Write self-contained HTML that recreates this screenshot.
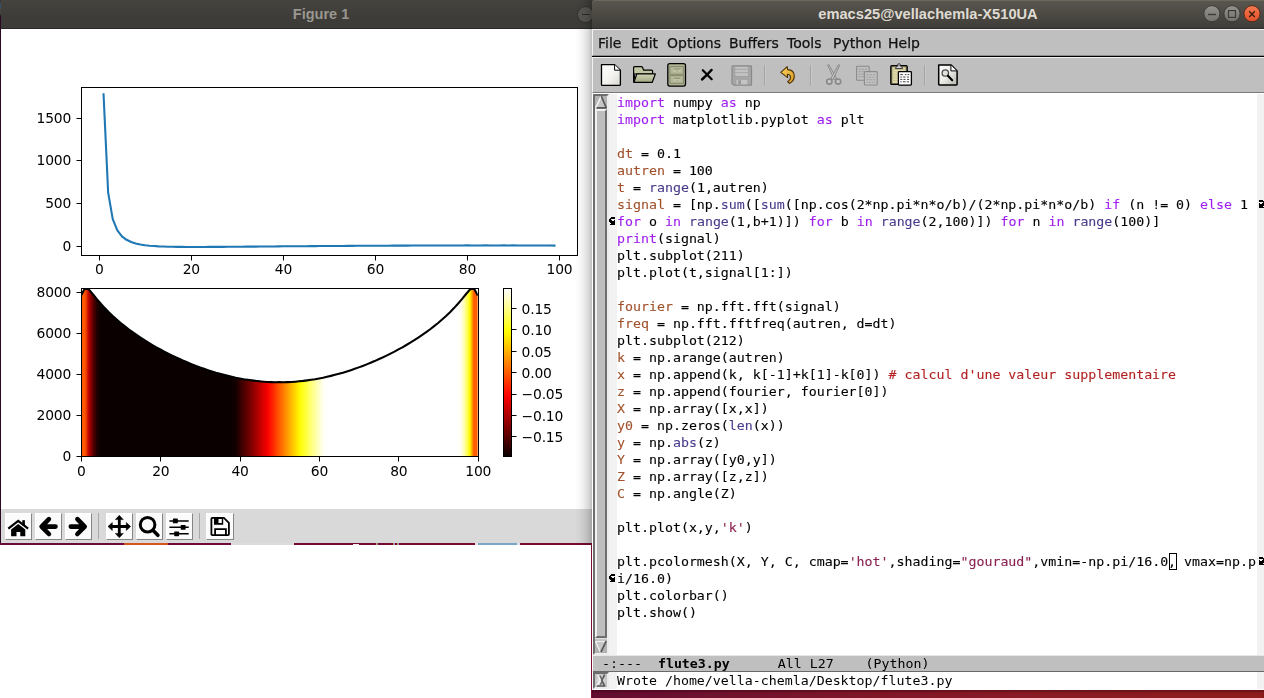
<!DOCTYPE html>
<html lang="en">
<head>
<meta charset="utf-8">
<title>Figure 1 / emacs25</title>
<style>
html,body{margin:0;padding:0}
body{width:1264px;height:698px;overflow:hidden;position:relative;background:#fff;font-family:"Liberation Sans","DejaVu Sans",sans-serif}
.abs{position:absolute}
/* ---------- figure window ---------- */
#canvas{will-change:transform}
#leftstrip{left:0;top:0;width:1px;height:545px;background:linear-gradient(#3a3b38 0,#3a3b38 2px,#35506e 4px,#35506e 7px,#45443f 9px,#45443f 14px,#2a0a22 16px)}
#figtitle{left:1px;top:0;width:700px;height:28px;background:linear-gradient(#45443f,#3d3c38 60%)}
#figtitle:after{content:"";position:absolute;left:0;top:28px;width:100%;height:1px;background:#2b2a26}
#figname{left:1px;top:0;width:640px;height:28px;line-height:28px;text-align:center;color:#9a9790;font-weight:bold;font-size:14.5px}
#figmin{left:577px;top:5.5px;width:17px;height:17px;border-radius:50%;background:#595853;border:1px solid #32312e;box-sizing:border-box}
#figmin:after{content:"";position:absolute;left:4px;top:7.6px;width:8px;height:1.2px;background:#2f2e2b}
#figtb{left:1px;top:509px;width:640px;height:34px;background:#d9d9d9}
.tbtn{position:absolute;top:4px;width:27px;height:27px;background:#fbfbfb;box-sizing:border-box;border:1px solid;border-color:#fff #858585 #858585 #fff}
.tbtn svg{position:absolute;left:-1px;top:-1px}
.tsep{position:absolute;top:4px;width:1px;height:26px;background:#a8a8a8}
#strip{left:0;top:543px;width:592px;height:2px;background:linear-gradient(90deg,#6a0a3c,#7a0a2e)}
#strip i{position:absolute;top:0;height:2px;display:block}
#vline{left:591px;top:545px;width:1px;height:153px;background:#7a1038}
/* ---------- emacs window ---------- */
#emacs{left:592px;top:0;width:672px;height:690px}
#eshadow{left:570px;top:0;width:22px;height:545px;background:linear-gradient(90deg,rgba(0,0,0,0) 20%,rgba(0,0,0,.025) 42%,rgba(0,0,0,.075) 64%,rgba(0,0,0,.15) 84%,rgba(0,0,0,.25))}
#etitle{left:0;top:0;width:672px;height:28px;background:linear-gradient(#5a574f,#3f3d39);border-top-left-radius:4px;box-shadow:inset 0 1px 0 #6a685d}
#etitle:after{content:"";position:absolute;left:0;top:28px;width:100%;height:1px;background:#2e2d29}
#ename{left:0;top:0;width:672px;height:28px;line-height:28px;text-align:center;color:#dfdbd2;font-weight:bold;font-size:14.65px}
#menubar{left:0;top:29px;width:672px;height:27px;background:#bfbfbf;border-top:1px solid #f2f2f2;border-left:1px solid #f2f2f2;box-sizing:border-box;border-bottom:1px solid #8c8c8c}
.mi{position:absolute;top:4px;font-size:14px;line-height:18px;color:#111;font-family:"DejaVu Sans","Liberation Sans",sans-serif;white-space:pre;-webkit-text-stroke:.25px #111}
#blackline{left:0;top:56px;width:672px;height:1px;background:#000}
#toolbar{left:0;top:57px;width:672px;height:36px;background:#bfbfbf;border-top:1px solid #f0f0f0;border-left:1px solid #f2f2f2;border-bottom:1px solid #7a7a7a;box-sizing:border-box}
.esep{position:absolute;top:8px;width:1px;height:20px;background:#a2a2a2;box-shadow:1px 0 0 #d0d0d0}
.ico{position:absolute}
#textarea{left:0;top:93px;width:672px;height:597px;background:#fff}
#lfringe{left:17px;top:94px;width:8px;height:561px;background:#f2f2f2}
#rfringe{left:665px;top:94px;width:7px;height:561px;background:#f2f2f2}
#code{left:25px;top:94px;width:640px;font-family:"DejaVu Sans Mono","Liberation Mono",monospace;font-size:13.288px;color:#000}
.ln{-webkit-text-stroke-width:.12px;height:17px;line-height:17px;white-space:pre;transform:scaleY(.93);transform-origin:0 13px}
.k{color:#a020f0}.v{color:#a0522d}.b{color:#483d8b}.s{color:#8b2252}.c{color:#b22222}
#cursor{left:577px;top:553px;width:6px;height:15px;border:1px solid #000;box-sizing:content-box}
/* scrollbar */
#sb{left:1px;top:94px;width:16px;height:561px;background:#b3b3b3;border:2px solid;border-color:#6e6e6e #ececec #ececec #6e6e6e;box-sizing:border-box}
#thumb{left:0;top:13px;width:12px;height:529px;background:#bdbdbd;box-sizing:border-box;border:2px solid;border-color:#f2f2f2 #6e6e6e #6e6e6e #f2f2f2}
#modeline{left:1px;top:655px;width:671px;height:17px;background:#bfbfbf;box-sizing:border-box;border-top:1px solid #e6e6e6;border-bottom:1px solid #6a6a6a;font-family:"DejaVu Sans Mono","Liberation Mono",monospace;font-size:13.288px;line-height:15px;white-space:pre;color:#000;padding-left:1px}
#mltext{display:block;height:15px;transform:scaleY(.93);transform-origin:0 12px}
#echo{left:25px;top:672px;width:640px;height:17px;line-height:17px;font-family:"DejaVu Sans Mono","Liberation Mono",monospace;font-size:13.288px;white-space:pre;color:#000;transform:scaleY(.93);transform-origin:0 13px}
#elf{left:17px;top:672px;width:8px;height:17px;background:#f2f2f2}
#erf{left:665px;top:672px;width:7px;height:17px;background:#f2f2f2}
#msb{left:1px;top:672px;width:16px;height:17px;background:#c4c4c4;border:2px solid;border-color:#6e6e6e #ececec #ececec #6e6e6e;box-sizing:border-box}
#bottom{left:592px;top:690px;width:672px;height:8px;background:linear-gradient(90deg,#640b30,#6e1130 16%,#7e1629 38%,#881a26 61%,#8e1d1c);box-shadow:inset 0 2px 2px rgba(30,0,0,.3)}
</style>
</head>
<body>
<div id="leftstrip" class="abs"></div>
<div id="figtitle" class="abs"></div>
<div id="figname" class="abs">Figure 1</div>
<div id="figmin" class="abs"></div>
<svg id="canvas" width="640" height="480" viewBox="0 0 640 480" style="position:absolute;left:1px;top:29px;font-family:'DejaVu Sans','Liberation Sans',sans-serif;font-size:13.89px;letter-spacing:-0.2px">
<rect width="640" height="480" fill="#fff"/>
<polyline points="102.55,65.24 107.15,163.58 111.75,190.16 116.35,201.45 120.95,207.37 125.55,210.81 130.15,213.02 134.75,214.45 139.35,215.46 143.96,216.17 148.56,216.70 153.16,217.04 157.76,217.35 162.36,217.53 166.96,217.68 171.56,217.78 176.16,217.88 180.76,217.90 185.37,217.96 189.97,217.94 194.57,217.96 199.17,217.96 203.77,217.96 208.37,217.90 212.97,217.91 217.57,217.87 222.17,217.85 226.78,217.80 231.38,217.79 235.98,217.71 240.58,217.72 245.18,217.65 249.78,217.63 254.38,217.59 258.98,217.55 263.58,217.48 268.19,217.49 272.79,217.43 277.39,217.40 281.99,217.33 286.59,217.33 291.19,217.26 295.79,217.26 300.39,217.20 304.99,217.17 309.60,217.14 314.20,217.12 318.80,217.04 323.40,217.05 328.00,217.00 332.60,216.98 337.20,216.94 341.80,216.94 346.40,216.87 351.01,216.87 355.61,216.82 360.21,216.82 364.81,216.79 369.41,216.78 374.01,216.70 378.61,216.73 383.21,216.70 387.81,216.67 392.42,216.64 397.02,216.64 401.62,216.60 406.22,216.61 410.82,216.57 415.42,216.57 420.02,216.53 424.62,216.54 429.22,216.48 433.83,216.52 438.43,216.50 443.03,216.48 447.63,216.46 452.23,216.47 456.83,216.44 461.43,216.46 466.03,216.41 470.63,216.43 475.24,216.43 479.84,216.44 484.44,216.39 489.04,216.43 493.64,216.42 498.24,216.43 502.84,216.41 507.44,216.44 512.04,216.40 516.65,216.44 521.25,216.44 525.85,216.47 530.45,216.47 535.05,216.49 539.65,216.47 544.25,216.54 548.85,216.55 553.45,216.58" fill="none" stroke="#1f77b4" stroke-width="2.08" stroke-linejoin="round" stroke-linecap="square"/>
<line x1="98.5" y1="226.5" x2="98.5" y2="231.5" stroke="#000" stroke-width="1.0"/>
<text x="98.34" y="245" text-anchor="middle">0</text>
<line x1="190.5" y1="226.5" x2="190.5" y2="231.5" stroke="#000" stroke-width="1.0"/>
<text x="190.37" y="245" text-anchor="middle">20</text>
<line x1="282.5" y1="226.5" x2="282.5" y2="231.5" stroke="#000" stroke-width="1.0"/>
<text x="282.39" y="245" text-anchor="middle">40</text>
<line x1="374.5" y1="226.5" x2="374.5" y2="231.5" stroke="#000" stroke-width="1.0"/>
<text x="374.41" y="245" text-anchor="middle">60</text>
<line x1="466.5" y1="226.5" x2="466.5" y2="231.5" stroke="#000" stroke-width="1.0"/>
<text x="466.43" y="245" text-anchor="middle">80</text>
<line x1="558.5" y1="226.5" x2="558.5" y2="231.5" stroke="#000" stroke-width="1.0"/>
<text x="558.46" y="245" text-anchor="middle">100</text>
<line x1="75.5" y1="217.5" x2="80.5" y2="217.5" stroke="#000" stroke-width="1.0"/>
<text x="70.08" y="222" text-anchor="end">0</text>
<line x1="75.5" y1="174.5" x2="80.5" y2="174.5" stroke="#000" stroke-width="1.0"/>
<text x="70.08" y="179" text-anchor="end">500</text>
<line x1="75.5" y1="131.5" x2="80.5" y2="131.5" stroke="#000" stroke-width="1.0"/>
<text x="70.08" y="136" text-anchor="end">1000</text>
<line x1="75.5" y1="89.5" x2="80.5" y2="89.5" stroke="#000" stroke-width="1.0"/>
<text x="70.08" y="94" text-anchor="end">1500</text>
<rect x="80.5" y="58.5" width="496.0" height="168.0" fill="none" stroke="#000" stroke-width="1.0"/>
<defs><linearGradient id="hotg" gradientUnits="userSpaceOnUse" x1="80.00" y1="0" x2="476.80" y2="0">
<stop offset="0.00" stop-color="#ff5c00"/>
<stop offset="0.01" stop-color="#ff5600"/>
<stop offset="0.02" stop-color="#ba0000"/>
<stop offset="0.03" stop-color="#5f0000"/>
<stop offset="0.04" stop-color="#1d0000"/>
<stop offset="0.05" stop-color="#0b0000"/>
<stop offset="0.38" stop-color="#0b0000"/>
<stop offset="0.39" stop-color="#120000"/>
<stop offset="0.40" stop-color="#2f0000"/>
<stop offset="0.41" stop-color="#4a0000"/>
<stop offset="0.42" stop-color="#640000"/>
<stop offset="0.43" stop-color="#810000"/>
<stop offset="0.44" stop-color="#a00000"/>
<stop offset="0.45" stop-color="#bd0000"/>
<stop offset="0.46" stop-color="#dd0000"/>
<stop offset="0.47" stop-color="#f90000"/>
<stop offset="0.48" stop-color="#ff1a00"/>
<stop offset="0.49" stop-color="#ff3a00"/>
<stop offset="0.50" stop-color="#ff5c00"/>
<stop offset="0.51" stop-color="#ff7b00"/>
<stop offset="0.52" stop-color="#ff9b00"/>
<stop offset="0.53" stop-color="#ffba00"/>
<stop offset="0.54" stop-color="#ffd700"/>
<stop offset="0.55" stop-color="#fff600"/>
<stop offset="0.56" stop-color="#ffff1f"/>
<stop offset="0.57" stop-color="#ffff4e"/>
<stop offset="0.58" stop-color="#ffff79"/>
<stop offset="0.59" stop-color="#ffffa0"/>
<stop offset="0.60" stop-color="#ffffc8"/>
<stop offset="0.61" stop-color="#fffff3"/>
<stop offset="0.62" stop-color="#ffffff"/>
<stop offset="0.95" stop-color="#ffffff"/>
<stop offset="0.96" stop-color="#ffffe3"/>
<stop offset="0.97" stop-color="#ffff81"/>
<stop offset="0.98" stop-color="#fff900"/>
<stop offset="0.99" stop-color="#ff5e00"/>
<stop offset="1.00" stop-color="#ff5c00"/>
</linearGradient>
<linearGradient id="cbg" x1="0" y1="1" x2="0" y2="0">
<stop offset="0.0000" stop-color="#0b0000"/>
<stop offset="0.0312" stop-color="#200000"/>
<stop offset="0.0625" stop-color="#350000"/>
<stop offset="0.0938" stop-color="#4a0000"/>
<stop offset="0.1250" stop-color="#5f0000"/>
<stop offset="0.1562" stop-color="#740000"/>
<stop offset="0.1875" stop-color="#890000"/>
<stop offset="0.2188" stop-color="#9e0000"/>
<stop offset="0.2500" stop-color="#b30000"/>
<stop offset="0.2812" stop-color="#c80000"/>
<stop offset="0.3125" stop-color="#dd0000"/>
<stop offset="0.3438" stop-color="#f20000"/>
<stop offset="0.3750" stop-color="#ff0800"/>
<stop offset="0.4062" stop-color="#ff1d00"/>
<stop offset="0.4375" stop-color="#ff3200"/>
<stop offset="0.4688" stop-color="#ff4700"/>
<stop offset="0.5000" stop-color="#ff5c00"/>
<stop offset="0.5312" stop-color="#ff7100"/>
<stop offset="0.5625" stop-color="#ff8600"/>
<stop offset="0.5938" stop-color="#ff9b00"/>
<stop offset="0.6250" stop-color="#ffb000"/>
<stop offset="0.6562" stop-color="#ffc500"/>
<stop offset="0.6875" stop-color="#ffda00"/>
<stop offset="0.7188" stop-color="#ffef00"/>
<stop offset="0.7500" stop-color="#ffff07"/>
<stop offset="0.7812" stop-color="#ffff26"/>
<stop offset="0.8125" stop-color="#ffff46"/>
<stop offset="0.8438" stop-color="#ffff65"/>
<stop offset="0.8750" stop-color="#ffff85"/>
<stop offset="0.9062" stop-color="#ffffa4"/>
<stop offset="0.9375" stop-color="#ffffc4"/>
<stop offset="0.9688" stop-color="#ffffe3"/>
<stop offset="1.0000" stop-color="#ffffff"/>
</linearGradient>
<clipPath id="ax2clip"><rect x="80.00" y="259.20" width="396.80" height="168.00"/></clipPath></defs>
<g clip-path="url(#ax2clip)"><polygon points="80.00,427.20 80.00,266.59 83.97,259.20 87.94,260.56 91.90,265.23 95.87,270.11 99.84,274.75 103.81,279.09 107.78,283.16 111.74,286.97 115.71,290.56 119.68,293.95 123.65,297.17 127.62,300.25 131.58,303.16 135.55,305.95 139.52,308.64 143.49,311.21 147.46,313.64 151.42,316.02 155.39,318.31 159.36,320.45 163.33,322.62 167.30,324.65 171.26,326.62 175.23,328.51 179.20,330.26 183.17,332.08 187.14,333.76 191.10,335.38 195.07,336.91 199.04,338.39 203.01,339.80 206.98,341.15 210.94,342.41 214.91,343.66 218.88,344.79 222.85,345.86 226.82,346.87 230.78,347.80 234.75,348.67 238.72,349.42 242.69,350.18 246.66,350.83 250.62,351.39 254.59,351.90 258.56,352.32 262.53,352.67 266.50,352.94 270.46,353.13 274.43,353.25 278.40,353.03 282.37,353.25 286.34,353.13 290.30,352.94 294.27,352.67 298.24,352.32 302.21,351.90 306.18,351.39 310.14,350.83 314.11,350.18 318.08,349.42 322.05,348.67 326.02,347.80 329.98,346.87 333.95,345.86 337.92,344.79 341.89,343.66 345.86,342.41 349.82,341.15 353.79,339.80 357.76,338.39 361.73,336.91 365.70,335.38 369.66,333.76 373.63,332.08 377.60,330.26 381.57,328.51 385.54,326.62 389.50,324.65 393.47,322.62 397.44,320.45 401.41,318.31 405.38,316.02 409.34,313.64 413.31,311.21 417.28,308.64 421.25,305.95 425.22,303.16 429.18,300.25 433.15,297.17 437.12,293.95 441.09,290.56 445.06,286.97 449.02,283.16 452.99,279.09 456.96,274.75 460.93,270.11 464.90,265.23 468.86,260.56 472.83,259.20 476.80,266.59 476.80,427.20" fill="url(#hotg)"/>
<polyline points="80.00,266.59 83.97,259.20 87.94,260.56 91.90,265.23 95.87,270.11 99.84,274.75 103.81,279.09 107.78,283.16 111.74,286.97 115.71,290.56 119.68,293.95 123.65,297.17 127.62,300.25 131.58,303.16 135.55,305.95 139.52,308.64 143.49,311.21 147.46,313.64 151.42,316.02 155.39,318.31 159.36,320.45 163.33,322.62 167.30,324.65 171.26,326.62 175.23,328.51 179.20,330.26 183.17,332.08 187.14,333.76 191.10,335.38 195.07,336.91 199.04,338.39 203.01,339.80 206.98,341.15 210.94,342.41 214.91,343.66 218.88,344.79 222.85,345.86 226.82,346.87 230.78,347.80 234.75,348.67 238.72,349.42 242.69,350.18 246.66,350.83 250.62,351.39 254.59,351.90 258.56,352.32 262.53,352.67 266.50,352.94 270.46,353.13 274.43,353.25 278.40,353.03 282.37,353.25 286.34,353.13 290.30,352.94 294.27,352.67 298.24,352.32 302.21,351.90 306.18,351.39 310.14,350.83 314.11,350.18 318.08,349.42 322.05,348.67 326.02,347.80 329.98,346.87 333.95,345.86 337.92,344.79 341.89,343.66 345.86,342.41 349.82,341.15 353.79,339.80 357.76,338.39 361.73,336.91 365.70,335.38 369.66,333.76 373.63,332.08 377.60,330.26 381.57,328.51 385.54,326.62 389.50,324.65 393.47,322.62 397.44,320.45 401.41,318.31 405.38,316.02 409.34,313.64 413.31,311.21 417.28,308.64 421.25,305.95 425.22,303.16 429.18,300.25 433.15,297.17 437.12,293.95 441.09,290.56 445.06,286.97 449.02,283.16 452.99,279.09 456.96,274.75 460.93,270.11 464.90,265.23 468.86,260.56 472.83,259.20 476.80,266.59" fill="none" stroke="#000" stroke-width="2.08" stroke-linejoin="round"/></g>
<line x1="80.5" y1="427.5" x2="80.5" y2="432.5" stroke="#000" stroke-width="1.0"/>
<text x="80.40" y="447" text-anchor="middle">0</text>
<line x1="159.5" y1="427.5" x2="159.5" y2="432.5" stroke="#000" stroke-width="1.0"/>
<text x="159.76" y="447" text-anchor="middle">20</text>
<line x1="239.5" y1="427.5" x2="239.5" y2="432.5" stroke="#000" stroke-width="1.0"/>
<text x="239.12" y="447" text-anchor="middle">40</text>
<line x1="318.5" y1="427.5" x2="318.5" y2="432.5" stroke="#000" stroke-width="1.0"/>
<text x="318.48" y="447" text-anchor="middle">60</text>
<line x1="397.5" y1="427.5" x2="397.5" y2="432.5" stroke="#000" stroke-width="1.0"/>
<text x="397.84" y="447" text-anchor="middle">80</text>
<line x1="477.5" y1="427.5" x2="477.5" y2="432.5" stroke="#000" stroke-width="1.0"/>
<text x="477.20" y="447" text-anchor="middle">100</text>
<line x1="75.5" y1="427.5" x2="80.5" y2="427.5" stroke="#000" stroke-width="1.0"/>
<text x="70.08" y="432" text-anchor="end">0</text>
<line x1="75.5" y1="386.5" x2="80.5" y2="386.5" stroke="#000" stroke-width="1.0"/>
<text x="70.08" y="391" text-anchor="end">2000</text>
<line x1="75.5" y1="345.5" x2="80.5" y2="345.5" stroke="#000" stroke-width="1.0"/>
<text x="70.08" y="350" text-anchor="end">4000</text>
<line x1="75.5" y1="304.5" x2="80.5" y2="304.5" stroke="#000" stroke-width="1.0"/>
<text x="70.08" y="309" text-anchor="end">6000</text>
<line x1="75.5" y1="263.5" x2="80.5" y2="263.5" stroke="#000" stroke-width="1.0"/>
<text x="70.08" y="268" text-anchor="end">8000</text>
<rect x="80.5" y="259.5" width="397.0" height="168.0" fill="none" stroke="#000" stroke-width="1.0"/>
<rect x="502.5" y="259.5" width="8.0" height="168.0" fill="url(#cbg)" stroke="#000" stroke-width="1.0"/>
<line x1="510.5" y1="407.5" x2="515.5" y2="407.5" stroke="#000" stroke-width="1.0"/>
<text x="520.62" y="413" text-anchor="start">−0.15</text>
<line x1="510.5" y1="386.5" x2="515.5" y2="386.5" stroke="#000" stroke-width="1.0"/>
<text x="520.62" y="392" text-anchor="start">−0.10</text>
<line x1="510.5" y1="365.5" x2="515.5" y2="365.5" stroke="#000" stroke-width="1.0"/>
<text x="520.62" y="370" text-anchor="start">−0.05</text>
<line x1="510.5" y1="343.5" x2="515.5" y2="343.5" stroke="#000" stroke-width="1.0"/>
<text x="520.62" y="349" text-anchor="start">0.00</text>
<line x1="510.5" y1="322.5" x2="515.5" y2="322.5" stroke="#000" stroke-width="1.0"/>
<text x="520.62" y="328" text-anchor="start">0.05</text>
<line x1="510.5" y1="300.5" x2="515.5" y2="300.5" stroke="#000" stroke-width="1.0"/>
<text x="520.62" y="306" text-anchor="start">0.10</text>
<line x1="510.5" y1="279.5" x2="515.5" y2="279.5" stroke="#000" stroke-width="1.0"/>
<text x="520.62" y="285" text-anchor="start">0.15</text>
</svg>
<div id="figtb" class="abs">
<div class="tbtn" style="left:4px"><svg width="27" height="27" viewBox="0 0 27 27"><path d="M3.3 15.7 L13.2 7.9 L23.1 15.7" fill="none" stroke="#000" stroke-width="2.2" stroke-linejoin="miter"/><rect x="17.3" y="7.2" width="2.6" height="5.5" fill="#000"/><path d="M6.1 16.6 L13.2 11 L20.3 16.6 V23.2 H15.3 V18.9 H11.5 V23.2 H6.1 Z" fill="#000"/></svg></div>
<div class="tbtn" style="left:34px"><svg width="27" height="27" viewBox="0 0 27 27"><path d="M13.9 6.2 L6.6 13.6 L13.9 21 M7.2 13.6 H20.5" fill="none" stroke="#000" stroke-width="4.6" stroke-linecap="round" stroke-linejoin="round"/></svg></div>
<div class="tbtn" style="left:64px"><svg width="27" height="27" viewBox="0 0 27 27"><path d="M12.4 6.2 L19.7 13.6 L12.4 21 M19.1 13.6 H5.8" fill="none" stroke="#000" stroke-width="4.6" stroke-linecap="round" stroke-linejoin="round"/></svg></div>
<div class="tsep" style="left:97px"></div>
<div class="tbtn" style="left:105px"><svg width="27" height="27" viewBox="0 0 27 27"><path d="M13.3 5 V22 M5 13.5 H22" fill="none" stroke="#000" stroke-width="2.8"/><path d="M13.3 2.3 L17.3 6.6 H9.3 Z M13.3 24.7 L17.3 20.4 H9.3 Z M2 13.5 L6.3 9.5 V17.5 Z M24.6 13.5 L20.3 9.5 V17.5 Z" fill="#000" stroke="#000" stroke-width="0.5" stroke-linejoin="round"/></svg></div>
<div class="tbtn" style="left:135px"><svg width="27" height="27" viewBox="0 0 27 27"><circle cx="11.6" cy="11.7" r="7.3" fill="none" stroke="#000" stroke-width="3"/><path d="M17.2 17.4 L21.9 22.3" stroke="#000" stroke-width="3.6" stroke-linecap="round"/></svg></div>
<div class="tbtn" style="left:165px"><svg width="27" height="27" viewBox="0 0 27 27"><path d="M3.4 7.9 H22.7 M3.4 14.3 H22.7 M3.4 20.8 H22.7" stroke="#000" stroke-width="1.5"/><rect x="6.9" y="5.5" width="4.9" height="4.8" rx="0.6" fill="#000"/><rect x="14.7" y="11.9" width="4.9" height="4.8" rx="0.6" fill="#000"/><rect x="8.2" y="18.4" width="4.9" height="4.8" rx="0.6" fill="#000"/></svg></div>
<div class="tsep" style="left:198px"></div>
<div class="tbtn" style="left:205px;width:28px"><svg width="28" height="27" viewBox="-1 0 28 27"><path d="M5.4 4.9 H16.9 L21.9 9.9 V21.2 Q21.9 22.1 21 22.1 H5.4 Q4.4 22.1 4.4 21.2 V5.9 Q4.4 4.9 5.4 4.9 Z" fill="none" stroke="#000" stroke-width="1.8"/><path d="M7 4.9 H16.2 V11.7 H7 Z M11.5 6 V10 H14.8 V6 Z" fill="#000" fill-rule="evenodd"/><path d="M8.1 22 V16.2 H18.9 V22" fill="none" stroke="#000" stroke-width="1.8"/></svg></div>

</div>
<div id="strip" class="abs"><i style="left:124px;width:44px;background:#d4541e"></i><i style="left:231px;width:63px;background:#dcdcdc"></i><i style="left:353px;top:1px;width:6px;height:1px;background:#f6eef2"></i><i style="left:376px;width:1px;background:#d9924a"></i><i style="left:377px;width:1px;background:#6b8fc0"></i><i style="left:393px;width:1px;background:#d9924a"></i><i style="left:394px;width:1px;background:#6b8fc0"></i><i style="left:397px;width:1px;background:#d9924a"></i><i style="left:398px;width:1px;background:#6b8fc0"></i><i style="left:475px;width:3px;background:#e6dfe3"></i><i style="left:478px;width:39px;background:#79a5c6"></i><i style="left:517px;width:3px;background:#e6dfe3"></i></div>
<div id="vline" class="abs"></div>
<div id="bottom" class="abs"></div>
<div id="eshadow" class="abs"></div>
<div id="emacs" class="abs">
 <div id="etitle" class="abs"></div>
 <div id="ename" class="abs">emacs25@vellachemla-X510UA</div>
 <svg class="abs" style="left:600px;top:0" width="72" height="28" viewBox="1192 0 72 28">
<defs>
<linearGradient id="wb" x1="0" y1="0" x2="0" y2="1"><stop offset="0" stop-color="#94928c"/><stop offset="1" stop-color="#75736d"/></linearGradient>
<linearGradient id="wc" x1="0" y1="0" x2="0" y2="1"><stop offset="0" stop-color="#f57a50"/><stop offset="1" stop-color="#e24f27"/></linearGradient>
</defs>
<circle cx="1211.9" cy="13.7" r="8.1" fill="url(#wb)" stroke="#3a3935" stroke-width="1"/>
<path d="M1208 14.5 H1216" stroke="#3d3c38" stroke-width="1.4"/>
<circle cx="1232" cy="13.7" r="8.1" fill="url(#wb)" stroke="#3a3935" stroke-width="1"/>
<rect x="1228.5" y="10.6" width="7" height="6.8" fill="none" stroke="#3d3c38" stroke-width="1.2"/>
<circle cx="1252" cy="13.7" r="8.1" fill="url(#wc)" stroke="#4a2a1e" stroke-width="1"/>
<path d="M1249.2 11.3 L1254.8 16.9 M1254.8 11.3 L1249.2 16.9" stroke="#3c1d12" stroke-width="1.4"/>
</svg>

 <div id="menubar" class="abs">
  <span class="mi" style="left:5px">File</span>
  <span class="mi" style="left:38px">Edit</span>
  <span class="mi" style="left:74px">Options</span>
  <span class="mi" style="left:136px">Buffers</span>
  <span class="mi" style="left:194px">Tools</span>
  <span class="mi" style="left:240px">Python</span>
  <span class="mi" style="left:295px">Help</span>
 </div>
 <div id="blackline" class="abs"></div>
 <div id="toolbar" class="abs">
<svg class="abs" style="left:-1px;top:-1px" width="672" height="36" viewBox="592 57 672 36">
<defs>
<linearGradient id="pg" x1="0" y1="0" x2="1" y2="1"><stop offset="0" stop-color="#ffffff"/><stop offset=".55" stop-color="#f4f3f0"/><stop offset="1" stop-color="#d6d4cc"/></linearGradient>
<linearGradient id="pg2" x1="0" y1="0" x2="1" y2="1"><stop offset="0" stop-color="#ffffff"/><stop offset=".5" stop-color="#ecece8"/><stop offset="1" stop-color="#b4b4ac"/></linearGradient>
<linearGradient id="fo" x1="0" y1="0" x2="0" y2="1"><stop offset="0" stop-color="#d3d6b6"/><stop offset="1" stop-color="#a3a783"/></linearGradient>
<linearGradient id="ud" x1="0" y1="0" x2="1" y2="1"><stop offset="0" stop-color="#fbd560"/><stop offset="1" stop-color="#d8961c"/></linearGradient>
</defs>
<!-- new file -->
<path d="M601.5 64.6 H614.6 L620.4 70.3 V84.4 Q620.4 85.3 619.5 85.3 H602.4 Q601.5 85.3 601.5 84.4 Z" fill="url(#pg)" stroke="#000" stroke-width="1.3" stroke-linejoin="round"/>
<path d="M614.6 64.8 V70.2 H620.2" fill="#fff" stroke="#000" stroke-width="1" stroke-linejoin="round"/>
<!-- open folder -->
<path d="M633.6 67.5 Q633.6 66.6 634.5 66.6 H641.3 Q642.2 66.6 642.6 67.4 L643.6 70.2 H651.6 Q652.6 70.2 652.6 71.2 V74 H633.6 Z" fill="#c3c6a5" stroke="#000" stroke-width="1.2" stroke-linejoin="round"/>
<path d="M633.6 73 V81 Q633.6 82.3 634.6 82.3 H636 Z" fill="#b0b390" stroke="#000" stroke-width="1.2" stroke-linejoin="round"/>
<path d="M636.9 73.8 H655.4 L652.3 82.3 H633.9 Z" fill="url(#fo)" stroke="#000" stroke-width="1.2" stroke-linejoin="round"/>
<!-- dired cabinet -->
<rect x="667.8" y="63.7" width="17.7" height="22.4" rx="2" fill="#b0b393" stroke="#000" stroke-width="1.3"/>
<rect x="669.9" y="66.6" width="13.5" height="7.6" fill="#b5b898" stroke="#85886c" stroke-width="1"/>
<rect x="669.9" y="75.6" width="13.5" height="7.8" fill="#b5b898" stroke="#85886c" stroke-width="1"/>
<path d="M674.5 72 V69.6 H679.8 V72 M674.5 81.2 V78.8 H679.8 V81.2" fill="none" stroke="#c9ccad" stroke-width="1.3"/>
<path d="M674 69.1 H680.3 M674 78.3 H680.3" stroke="#7c7f64" stroke-width=".8"/>
<!-- close X -->
<path d="M702.8 70.2 L711.7 79.2" stroke="#000" stroke-width="2.2" stroke-linecap="round"/>
<path d="M711.6 69.9 L706.6 75.2 L702 79.5" stroke="#000" stroke-width="2.4" stroke-linecap="round" fill="none"/>
<!-- save (disabled) -->
<path d="M732 66.7 Q732 65.8 732.9 65.8 H750.6 Q751.5 65.8 751.5 66.7 V84.2 Q751.5 85.1 750.6 85.1 H733.9 L732 83.2 Z" fill="#a8a8a8" stroke="#898989" stroke-width="1.2"/>
<rect x="734.8" y="66.4" width="13.8" height="10.2" fill="#c2c2c2" stroke="#9a9a9a" stroke-width=".8"/>
<path d="M735 69.3 H748.4 M735 72.6 H748.4" stroke="#a8a8a8" stroke-width="1"/>
<rect x="735.9" y="79.2" width="12" height="5.6" fill="#c4c4c4" stroke="#9a9a9a" stroke-width=".8"/>
<rect x="738.3" y="80.3" width="2.6" height="4" fill="#969696"/>
<!-- separators -->
<path d="M764.5 65 V85.5 M810.5 65 V85.5 M924.5 65 V85.5" stroke="#a3a3a3" stroke-width="1"/>
<path d="M765.5 65 V85.5 M811.5 65 V85.5 M925.5 65 V85.5" stroke="#c9c9c9" stroke-width="1"/>
<!-- undo -->
<path d="M780.8 72.4 L787.2 66.6 L787.6 69.6 Q794.4 70 794.3 76.3 Q794.2 81.3 789.3 83.4 L787.6 81.7 Q791 79.4 790.4 76.6 Q789.9 74.3 787.4 74.3 L787.6 77.6 Z" fill="url(#ud)" stroke="#4a3208" stroke-width="1.1" stroke-linejoin="round"/>
<!-- cut (disabled) -->
<g stroke="#8a8a8a" stroke-width="1" stroke-linejoin="round">
<path d="M827.6 65 L828.9 64.8 L836.6 78.4 L834.4 79.6 Z" fill="#c2c2c2"/>
<path d="M839.8 65 L838.5 64.8 L830.8 78.4 L833 79.6 Z" fill="#c2c2c2"/>
<circle cx="829.3" cy="81.6" r="2.6" fill="#c8c8c8" stroke-width="1.7"/>
<circle cx="838.1" cy="81.6" r="2.6" fill="#c8c8c8" stroke-width="1.7"/>
</g>
<!-- copy (disabled) -->
<g stroke="#8b8b8b" stroke-width="1.1">
<rect x="856.6" y="66.2" width="12.6" height="14" rx=".8" fill="#bfbfbf"/>
<path d="M858.5 69.2 H867.3 M858.5 71.7 H867.3 M858.5 74.2 H867.3 M858.5 76.7 H867.3" stroke="#9a9a9a" stroke-dasharray="2.2 .9" stroke-width="1"/>
<rect x="864.4" y="71.6" width="12.8" height="13.4" rx=".8" fill="#c2c2c2"/>
<path d="M866.3 74.8 H875.3 M866.3 79.8 H875.3" stroke="#9a9a9a" stroke-dasharray="2.2 .9 3 .9" stroke-width="1"/>
<path d="M866.3 77.3 H875.3 M866.3 82.3 H875.3" stroke="#9a9a9a" stroke-dasharray="1.4 .9 2.6 .9" stroke-width="1"/>
</g>
<!-- paste -->
<rect x="890.8" y="65.6" width="16.4" height="18.8" rx="1" fill="#8f8a63" stroke="#000" stroke-width="1.3"/>
<rect x="892.5" y="67.3" width="13" height="15.6" fill="#e2dbae"/>
<path d="M892.5 69.5 H905.5 M892.5 71.7 H905.5 M892.5 73.9 H905.5 M892.5 76.1 H905.5 M892.5 78.3 H905.5 M892.5 80.5 H905.5" stroke="#c9c08e" stroke-width=".8"/>
<path d="M895.3 68.6 L896.5 66.4 H897.4 Q897.2 63.6 899 63.6 Q900.8 63.6 900.6 66.4 H901.5 L902.7 68.6 Z" fill="#cfcfcf" stroke="#3a3a3a" stroke-width="1"/>
<circle cx="899" cy="65.3" r=".7" fill="#555"/>
<rect x="898.4" y="71.7" width="13" height="13.4" rx=".8" fill="#fff" stroke="#000" stroke-width="1.3"/>
<path d="M900.3 74.6 H909.5" stroke="#1c1c1c" stroke-dasharray="2.6 2 1.6 1.2 1.6" stroke-width=".85"/>
<path d="M900.3 77 H909.5" stroke="#1c1c1c" stroke-dasharray="1.6 1.2 2.4 1.4 2" stroke-width=".85"/>
<path d="M900.3 79.4 H909.5" stroke="#1c1c1c" stroke-dasharray="2 1.2 2 1.6 2" stroke-width=".85"/>
<path d="M900.3 81.8 H909.5" stroke="#1c1c1c" stroke-dasharray="1.4 1.2 2.6 1.2 2.2" stroke-width=".85"/>
<!-- search -->
<path d="M938.7 64.9 H950.9 L957.1 71 V84.2 Q957.1 84.9 956.4 84.9 H939.4 Q938.7 84.9 938.7 84.2 Z" fill="url(#pg2)" stroke="#000" stroke-width="1.5" stroke-linejoin="round"/>
<path d="M950.9 65.2 V70.9 H956.8" fill="#fff" stroke="#000" stroke-width="1" stroke-linejoin="round"/>
<circle cx="945.3" cy="73" r="3.2" fill="#dfe4dc" stroke="#4c4c4c" stroke-width="1.3"/>
<path d="M947.9 75.8 L952.2 80.3" stroke="#000" stroke-width="2.1" stroke-linecap="round"/>
</svg>

 </div>
 <div id="textarea" class="abs"></div>
 <div id="lfringe" class="abs"></div>
 <div id="rfringe" class="abs"></div>
 <div id="sb" class="abs"><div id="thumb" class="abs"></div>
<svg class="abs" style="left:0;top:0" width="12" height="13" viewBox="0 0 12 13">
<polygon points="6.2,0.2 0.4,12.2 11.2,12.2" fill="#c6c6c6"/>
<path d="M6.2 0.2 L0.4 12.4" stroke="#f4f4f4" stroke-width="1.5"/>
<path d="M6.3 0.2 L11.3 12 M1.6 11.9 H11.6" stroke="#575757" stroke-width="1.7" fill="none"/>
</svg>
<svg class="abs" style="left:0;top:542px" width="12" height="15" viewBox="0 0 12 15">
<rect x="0" y="0" width="12" height="1.5" fill="#dcdcdc"/>
<polygon points="0.4,3.2 11.4,3.2 5.8,14.4" fill="#c6c6c6"/>
<path d="M0.4 3.2 L5.6 14.4 M0.4 3.4 H10.5" stroke="#f0f0f0" stroke-width="1.3" fill="none"/>
<path d="M11.2 3.2 L5.9 14.2" stroke="#575757" stroke-width="1.7"/>
</svg></div>
 <div id="code" class="abs">
<div class="ln"><span class="k">import</span> numpy <span class="k">as</span> np</div>
<div class="ln"><span class="k">import</span> matplotlib.pyplot <span class="k">as</span> plt</div>
<div class="ln"></div>
<div class="ln"><span class="v">dt</span> = 0.1</div>
<div class="ln"><span class="v">autren</span> = 100</div>
<div class="ln"><span class="v">t</span> = <span class="b">range</span>(1,autren)</div>
<div class="ln"><span class="v">signal</span> = [np.<span class="b">sum</span>([<span class="b">sum</span>([np.cos(2*np.pi*n*o/b)/(2*np.pi*n*o/b) <span class="k">if</span> (n != 0) <span class="k">else</span> 1 </div>
<div class="ln"><span class="k">for</span> o <span class="k">in</span> <span class="b">range</span>(1,b+1)]) <span class="k">for</span> b <span class="k">in</span> <span class="b">range</span>(2,100)]) <span class="k">for</span> n <span class="k">in</span> <span class="b">range</span>(100)]</div>
<div class="ln"><span class="k">print</span>(signal)</div>
<div class="ln">plt.subplot(211)</div>
<div class="ln">plt.plot(t,signal[1:])</div>
<div class="ln"></div>
<div class="ln"><span class="v">fourier</span> = np.fft.fft(signal)</div>
<div class="ln"><span class="v">freq</span> = np.fft.fftfreq(autren, d=dt)</div>
<div class="ln">plt.subplot(212)</div>
<div class="ln"><span class="v">k</span> = np.arange(autren)</div>
<div class="ln"><span class="v">x</span> = np.append(k, k[-1]+k[1]-k[0]) <span class="c"># calcul d'une valeur supplementaire</span></div>
<div class="ln"><span class="v">z</span> = np.append(fourier, fourier[0])</div>
<div class="ln"><span class="v">X</span> = np.array([x,x])</div>
<div class="ln"><span class="v">y0</span> = np.zeros(<span class="b">len</span>(x))</div>
<div class="ln"><span class="v">y</span> = np.<span class="b">abs</span>(z)</div>
<div class="ln"><span class="v">Y</span> = np.array([y0,y])</div>
<div class="ln"><span class="v">Z</span> = np.array([z,z])</div>
<div class="ln"><span class="v">C</span> = np.angle(Z)</div>
<div class="ln"></div>
<div class="ln">plt.plot(x,y,<span class="s">'k'</span>)</div>
<div class="ln"></div>
<div class="ln">plt.pcolormesh(X, Y, C, cmap=<span class="s">'hot'</span>,shading=<span class="s">"gouraud"</span>,vmin=-np.pi/16.0, vmax=np.p</div>
<div class="ln">i/16.0)</div>
<div class="ln">plt.colorbar()</div>
<div class="ln">plt.show()</div>
 </div>
 <div id="cursor" class="abs"></div>
 <svg class="abs" style="left:0;top:0" width="672" height="690" viewBox="592 0 672 690" shape-rendering="crispEdges" fill="#000"><rect x="611" y="217" width="4" height="1"/><rect x="610" y="218" width="5" height="1"/><rect x="609" y="219" width="2" height="1"/><rect x="609" y="220" width="3" height="1"/><rect x="614" y="220" width="1" height="1"/><rect x="609" y="221" width="6" height="1"/><rect x="610" y="222" width="5" height="1"/><rect x="611" y="223" width="4" height="1"/><rect x="610" y="224" width="5" height="1"/><rect x="611" y="574" width="4" height="1"/><rect x="610" y="575" width="5" height="1"/><rect x="609" y="576" width="2" height="1"/><rect x="609" y="577" width="3" height="1"/><rect x="614" y="577" width="1" height="1"/><rect x="609" y="578" width="6" height="1"/><rect x="610" y="579" width="5" height="1"/><rect x="611" y="580" width="4" height="1"/><rect x="610" y="581" width="5" height="1"/><rect x="1259" y="200" width="4" height="1"/><rect x="1259" y="201" width="5" height="1"/><rect x="1263" y="202" width="2" height="1"/><rect x="1259" y="203" width="1" height="1"/><rect x="1262" y="203" width="3" height="1"/><rect x="1259" y="204" width="6" height="1"/><rect x="1259" y="205" width="5" height="1"/><rect x="1259" y="206" width="4" height="1"/><rect x="1259" y="207" width="5" height="1"/><rect x="1259" y="557" width="4" height="1"/><rect x="1259" y="558" width="5" height="1"/><rect x="1263" y="559" width="2" height="1"/><rect x="1259" y="560" width="1" height="1"/><rect x="1262" y="560" width="3" height="1"/><rect x="1259" y="561" width="6" height="1"/><rect x="1259" y="562" width="5" height="1"/><rect x="1259" y="563" width="4" height="1"/><rect x="1259" y="564" width="5" height="1"/></svg>
 <div id="modeline" class="abs"><span id="mltext"> -:---  <b>flute3.py</b>      All L27    (Python)</span></div>
 <div id="msb" class="abs"><svg class="abs" style="left:0;top:0" width="12" height="13" viewBox="0 0 12 13">
<polygon points="6,0 1,6.5 6,13 11,6.5" fill="#d6d6d6"/>
<path d="M2.6 1 L5.2 6.5 L1.6 12" stroke="#f2f2f2" stroke-width="1.4" fill="none"/>
<path d="M9.6 0.6 L6.8 6.5 L9.6 12 M1.8 12 H10.4" stroke="#5c5c5c" stroke-width="1.7" fill="none"/>
<path d="M5 1.6 L7.4 6.5 L5.4 11" stroke="#6a6a6a" stroke-width="1.5" fill="none"/>
</svg></div>
 <div id="elf" class="abs"></div>
 <div id="erf" class="abs"></div>
 <div id="echo" class="abs">Wrote /home/vella-chemla/Desktop/flute3.py</div>
</div>
</body>
</html>
